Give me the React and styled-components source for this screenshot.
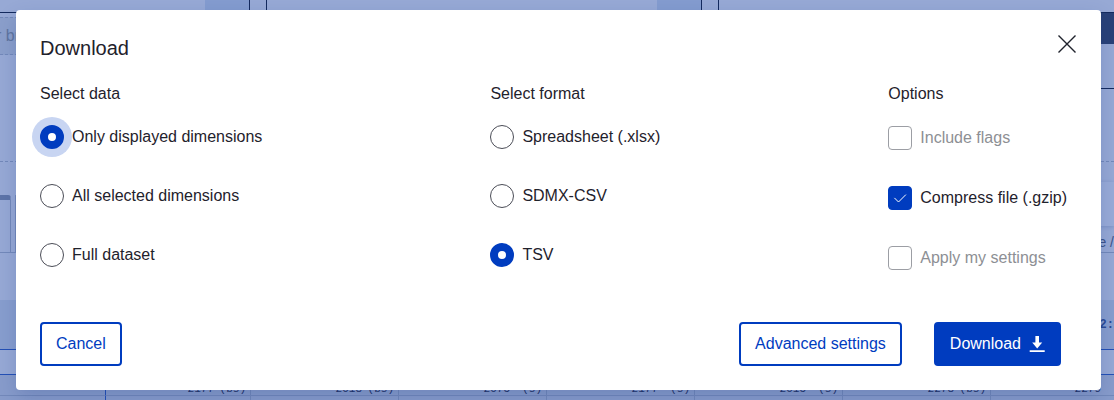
import React from "react";
import styled, { createGlobalStyle, css } from "styled-components";

const blue = "#003cbf";
const ink = "#1f222c";
const wash = "#97a9d5";
const navy = "#142a5e";
const rule = "#7389ba";

const GlobalStyle = createGlobalStyle`
  *, *::before, *::after { box-sizing: border-box; }
  body {
    margin: 0;
    background: ${wash};
    color: ${ink};
    font-family: "Liberation Sans", Arial, sans-serif;
    font-size: 16px;
    line-height: 24px;
  }
  button, input { font: inherit; margin: 0; }
`;

const Screen = styled.div`
  position: relative;
  overflow: hidden;
  min-height: 100vh;
`;

/* Dataset page behind the dialog */
const Backdrop = styled.div`
  position: absolute;
  inset: 0;
  overflow: hidden;
  color: #3c5389;
`;

const FilterBar = styled.div`
  display: flex;
  gap: 16px;
  height: 13px;
  border-bottom: 1px solid ${navy};
`;

const FilterBox = styled.div`
  flex: ${(p) => p.$flex};
  display: flex;
  justify-content: flex-end;
  border: solid ${navy};
  border-width: 0 1px;

  &:first-child { border-left: 0; }
  &:last-child { border-right: 0; }
`;

const FilterArrow = styled.div`
  width: 44px;
  background: #849ccf;
`;

const Split = styled.div`
  display: flex;
  justify-content: space-between;
  height: ${(p) => p.$height}px;
  border-bottom: ${(p) => (p.$dashed ? `1px dashed ${rule}` : p.$line ? `1px solid ${rule}` : "0")};
`;

const LayoutZone = styled.div`
  width: 50%;
  height: 38px;
  margin-top: 4px;
  border: dashed ${rule};
  border-width: 1px 0;
  background: #8b9fcb;
  color: #60759f;
  line-height: 36px;
  text-indent: -4px;
  white-space: nowrap;
`;

const SidePanel = styled.div`
  width: 50%;
  height: 76px;
  border-top: 31px solid #294177;
  border-bottom: 1px solid ${navy};
`;

const Tabs = styled.div`
  display: flex;
  gap: 4px;
  align-items: flex-end;
`;

const Tab = styled.div`
  width: ${(p) => p.$width}px;
  height: 57px;
  border: 1px solid ${rule};
  border-top: ${(p) => (p.$active ? 5 : 1)}px solid #5d74a8;
  border-bottom: 0;
  border-left: ${(p) => (p.$active ? "0" : `1px solid ${rule}`)};
  border-radius: 0 3px 0 0;
`;

const Tools = styled.div`
  display: flex;
  flex-direction: column;
  align-items: flex-end;
  justify-content: space-between;
  width: 200px;
  padding-top: 20px;
`;

const ToolCard = styled.div`
  width: 100%;
  height: 44px;
  background: #9aacd8;
  box-shadow: 0 1px 4px #7b91c4;
`;

const ToolLabel = styled.span`
  line-height: 20px;
  font-size: 14px;
`;

const TimeHeader = styled.div`
  height: 50px;
  border-bottom: 1px solid #2450b5;
  background: #889ece;
  text-align: right;
  color: #2c4a94;
  font-family: "Liberation Mono", monospace;
  font-size: 12px;
  font-weight: 700;
  line-height: 50px;
`;

const SubHeader = styled.div`
  height: 25px;
  border-bottom: 1px solid #2450b5;
`;

const DataTable = styled.table`
  width: 1138px;
  table-layout: fixed;
  border-collapse: separate;
  border-spacing: 0;
  background: #889ccb;
  color: #1f3266;
  font-family: "Liberation Mono", monospace;
  font-size: 11px;
  line-height: 20px;
`;

const Cell = styled.td`
  width: ${(p) => p.$width}px;
  height: 21px;
  padding: 4px 4px 0 0;
  border: solid ${rule};
  border-width: 0 1px 1px 0;
  line-height: 16px;

  &:first-child { border-right-color: #2450b5; }
`;

const CellContent = styled.div`
  display: flex;
  justify-content: flex-end;
  height: 16px;
  padding-top: 2px;
`;

const Flag = styled.span`
  width: 32px;
  text-align: right;
`;

/* Dialog */
const Overlay = styled.div`
  position: relative;
  padding: 10px 13px 10px 16px;
`;

const Dialog = styled.section`
  display: flex;
  flex-direction: column;
  padding: 24px;
  border-radius: 4px;
  background: #fff;
  box-shadow: 0 8px 20px rgba(20, 50, 125, 0.2);
`;

const Header = styled.header`
  display: flex;
  justify-content: space-between;
  align-items: flex-start;
`;

const Title = styled.h1`
  margin: 0;
  font-size: 20px;
  font-weight: 400;
  line-height: 28px;
`;

const CloseButton = styled.button`
  display: flex;
  padding: 0;
  border: 0;
  background: none;
  color: ${ink};
  cursor: pointer;
`;

const Columns = styled.div`
  display: flex;
  justify-content: space-between;
  margin-top: 20px;
  padding-right: 10px;
`;

const Group = styled.fieldset`
  display: flex;
  flex-direction: column;
  gap: ${(p) => p.$gap}px;
  min-width: 0;
  margin: 0;
  padding: 0;
  border: 0;
`;

const Legend = styled.legend`
  margin-bottom: ${(p) => p.$space}px;
  padding: 0;
`;

const Choice = styled.label`
  display: flex;
  align-items: center;
  gap: 8px;
  color: ${(p) => (p.$disabled ? "#8d8f94" : ink)};
  white-space: nowrap;
`;

const Radio = styled.input.attrs({ type: "radio" })`
  appearance: none;
  width: 24px;
  height: 24px;
  border: 1px solid #4b4d57;
  border-radius: 50%;
  background: #fff;

  &:checked { border: 8px solid ${blue}; }
  ${(p) =>
    p.$focused &&
    css`
      box-shadow: 0 0 0 8px #c8d5f2;
    `}
`;

const CheckWrap = styled.span`
  display: grid;
  place-items: center;
  > * { grid-area: 1 / 1; }
  svg { pointer-events: none; }
`;

const Checkbox = styled.input.attrs({ type: "checkbox" })`
  appearance: none;
  width: 24px;
  height: 24px;
  border: 1px solid #9c9ea4;
  border-radius: 4px;
  background: #fff;

  &:checked { border-color: ${blue}; background: ${blue}; }
`;

const Footer = styled.footer`
  display: flex;
  gap: 32px;
  margin-top: 52px;
  padding-right: 16px;
`;

const Button = styled.button`
  display: flex;
  align-items: center;
  gap: 8px;
  height: 44px;
  padding: 0 14px;
  border: 2px solid ${blue};
  border-radius: 4px;
  background: ${(p) => (p.$primary ? blue : "#fff")};
  color: ${(p) => (p.$primary ? "#fff" : blue)};
  cursor: pointer;
  white-space: nowrap;
`;

const CancelButton = styled(Button)`
  margin-right: auto;
`;

const CloseIcon = () => (
  <svg width="20" height="20" viewBox="0 0 20 20" fill="none" stroke="currentColor" strokeWidth="1.4" aria-hidden="true">
    <path d="M1.5 1.5l17 17M18.5 1.5l-17 17" />
  </svg>
);

const CheckIcon = () => (
  <svg width="14" height="10" viewBox="0 0 14 10" fill="none" stroke="#fff" strokeWidth="1" aria-hidden="true">
    <path d="M1.4 4.9l4.1 4.1L12.9 1.6" />
  </svg>
);

const DownloadIcon = () => (
  <svg width="16" height="16" viewBox="0 0 16 16" fill="currentColor" aria-hidden="true">
    <path d="M6.4 0h3.6v6.6h3.2L8.2 12.6 3.2 6.6h3.2zM.7 14.2h15v1.8H.7z" />
  </svg>
);

const dataOptions = ["Only displayed dimensions", "All selected dimensions", "Full dataset"];
const formatOptions = ["Spreadsheet (.xlsx)", "SDMX-CSV", "TSV"];
const extraOptions = [
  { label: "Include flags", disabled: true },
  { label: "Compress file (.gzip)", checked: true },
  { label: "Apply my settings", disabled: true },
];

const cells = [
  { width: 106 },
  { width: 145, value: "2177", flag: "(bs)" },
  { width: 148, value: "2018", flag: "(bs)" },
  { width: 148, value: "2075", flag: "(s)" },
  { width: 148, value: "2177", flag: "(s)" },
  { width: 148, value: "2015", flag: "(s)" },
  { width: 148, value: "2278", flag: "(bs)" },
  { width: 147, value: "2279", flag: "" },
];

const RadioGroup = ({ name, legend, options, selected, focused }) => (
  <Group $gap={35}>
    <Legend $space={19}>{legend}</Legend>
    {options.map((option) => (
      <Choice key={option}>
        <Radio name={name} defaultChecked={option === selected} $focused={option === focused} />
        {option}
      </Choice>
    ))}
  </Group>
);

const DatasetPage = () => (
  <Backdrop aria-hidden="true">
    <FilterBar>
      <FilterBox $flex="0 0 250px"><FilterArrow /></FilterBox>
      <FilterBox $flex="0 0 436px"><FilterArrow /></FilterBox>
      <FilterBox $flex="1" />
    </FilterBar>
    <Split $height={149} $dashed>
      <LayoutZone>r br</LayoutZone>
      <SidePanel />
    </Split>
    <Split $height={91} $line>
      <Tabs>
        <Tab $width={11} $active />
        <Tab $width={80} />
      </Tabs>
      <Tools>
        <ToolCard />
        <ToolLabel>e /</ToolLabel>
      </Tools>
    </Split>
    <Split $height={47} />
    <TimeHeader>2:</TimeHeader>
    <SubHeader />
    <DataTable>
      <tbody>
        {[0, 1].map((row) => (
          <tr key={row}>
            {cells.map((cell, i) => (
              <Cell key={i} $width={cell.width}>
                {row === 0 && cell.value && (
                  <CellContent>
                    {cell.value}
                    <Flag>{cell.flag}</Flag>
                  </CellContent>
                )}
              </Cell>
            ))}
          </tr>
        ))}
      </tbody>
    </DataTable>
  </Backdrop>
);

export default function App() {
  return (
    <Screen>
      <GlobalStyle />
      <DatasetPage />
      <Overlay>
        <Dialog role="dialog" aria-modal="true" aria-labelledby="dialog-title">
          <Header>
            <Title id="dialog-title">Download</Title>
            <CloseButton type="button" aria-label="Close">
              <CloseIcon />
            </CloseButton>
          </Header>
          <Columns>
            <RadioGroup
              name="data"
              legend="Select data"
              options={dataOptions}
              selected={dataOptions[0]}
              focused={dataOptions[0]}
            />
            <RadioGroup name="format" legend="Select format" options={formatOptions} selected="TSV" />
            <Group $gap={36}>
              <Legend $space={20}>Options</Legend>
              {extraOptions.map((option) => (
                <Choice key={option.label} $disabled={option.disabled}>
                  <CheckWrap>
                    <Checkbox defaultChecked={option.checked} disabled={option.disabled} />
                    {option.checked && <CheckIcon />}
                  </CheckWrap>
                  {option.label}
                </Choice>
              ))}
            </Group>
          </Columns>
          <Footer>
            <CancelButton type="button">Cancel</CancelButton>
            <Button type="button">Advanced settings</Button>
            <Button type="button" $primary>
              Download
              <DownloadIcon />
            </Button>
          </Footer>
        </Dialog>
      </Overlay>
    </Screen>
  );
}
